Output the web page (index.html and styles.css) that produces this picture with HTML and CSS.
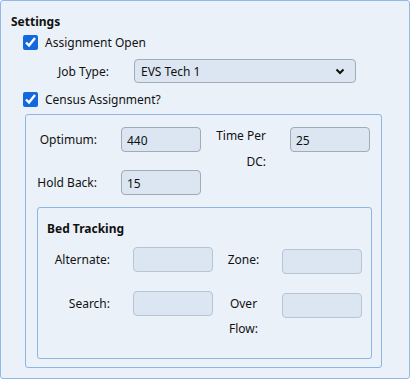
FILE: index.html
```html
<!DOCTYPE html>
<html lang="en">
<head>
    <meta charset="UTF-8">
    <meta name="viewport" content="width=device-width, initial-scale=1.0">
    <title>Settings</title>
    <link rel="stylesheet" href="styles.css">
</head>
<body>
    <div class="panel">
        <div class="title">Settings</div>

        <label class="check-row">
            <input type="checkbox" checked>
            <span>Assignment Open</span>
        </label>

        <div class="job-row">
            <span class="job-label">Job Type:</span>
            <span class="select-wrap">
                <select class="job-select">
                    <option>EVS Tech 1</option>
                    <option>EVS Tech 2</option>
                </select>
                <svg class="chevron" width="10" height="7" viewBox="0 0 10 7">
                    <path d="M1.5 1.5 L5 5 L8.5 1.5" fill="none" stroke="#111" stroke-width="2"/>
                </svg>
            </span>
        </div>

        <label class="check-row">
            <input type="checkbox" checked>
            <span>Census Assignment?</span>
        </label>

        <div class="group census">
            <div class="field-grid">
                <span class="lbl">Optimum:</span>
                <input class="box" type="text" value="440">
                <span class="lbl lbl-tall">Time Per<br>DC:</span>
                <input class="box" type="text" value="25">

                <span class="lbl">Hold Back:</span>
                <input class="box" type="text" value="15">
            </div>

            <div class="group bed">
                <div class="title">Bed Tracking</div>
                <div class="bed-grid">
                    <span class="lbl">Alternate:</span>
                    <input class="box empty" type="text">
                    <span class="lbl mid">Zone:</span>
                    <input class="box empty shift" type="text">

                    <span class="lbl">Search:</span>
                    <input class="box empty" type="text">
                    <span class="lbl mid">Over<br>Flow:</span>
                    <input class="box empty shift" type="text">
                </div>
            </div>
        </div>
    </div>
</body>
</html>
```

FILE: styles.css
```css
body {
    margin: 0;
    font-family: "Noto Sans", "Open Sans", sans-serif;
    font-size: 12px;
    color: #111;
    background: #fff;
}
.panel {
    box-sizing: border-box;
    width: 410px;
    height: 379px;
    padding: 12px 0 0 10px;
    background-color: #eaf1f9;
    border: 1px solid #93b7e6;
    border-radius: 3px;
}
.title {
    font-weight: bold;
    line-height: 18px;
}
.check-row {
    display: flex;
    align-items: center;
    gap: 7px;
    margin-left: 12px;
    height: 22px;
}
.check-row input {
    width: 15px;
    height: 15px;
    margin: 0;
    accent-color: #1268dc;
}
.job-row {
    display: flex;
    align-items: center;
    margin: 6px 0 5px 47px;
}
.job-label {
    width: 76px;
}
.select-wrap {
    position: relative;
    display: block;
}
.job-select {
    appearance: none;
    width: 222px;
    height: 24px;
    padding: 0 6px;
    font-family: inherit;
    font-size: 12px;
    color: #111;
    background-color: #dce6f2;
    border: 1px solid #a3abb4;
    border-radius: 4px;
}
.chevron {
    position: absolute;
    right: 11px;
    top: 9px;
    pointer-events: none;
}
.group {
    box-sizing: border-box;
    border: 1px solid #8fb4e6;
    border-radius: 3px;
}
.census {
    width: 357px;
    height: 254px;
    margin: 4px 0 0 14px;
    padding-top: 12px;
}
.field-grid,
.bed-grid {
    display: grid;
    grid-template-columns: 95px 80px 89px 80px;
    align-items: start;
}
.field-grid {
    row-gap: 18px;
}
.lbl {
    line-height: 25px;
    text-align: right;
    padding-right: 24px;
}
.lbl-tall {
    grid-row: span 2;
    line-height: 26px;
    margin-top: -4px;
}
.box {
    box-sizing: border-box;
    width: 80px;
    height: 25px;
    margin: 0;
    padding: 2px 5px 0;
    font-family: inherit;
    font-size: 12px;
    color: #111;
    background-color: #dbe6f2;
    border: 1px solid #a2aab3;
    border-radius: 4px;
}
.box.empty {
    border-color: #b5c5d3;
}
.bed {
    width: 335px;
    height: 152px;
    margin: 12px 0 0 11px;
    padding: 12px 0 0 9px;
}
.bed-grid {
    margin: 9px 0 0 -9px;
    grid-template-columns: 95px 80px 69px 80px;
    row-gap: 17px;
}
.bed-grid .lbl {
    padding-right: 23px;
}
.bed-grid .mid {
    text-align: center;
    padding-right: 8px;
}
.shift {
    margin-top: 2px;
}
```
